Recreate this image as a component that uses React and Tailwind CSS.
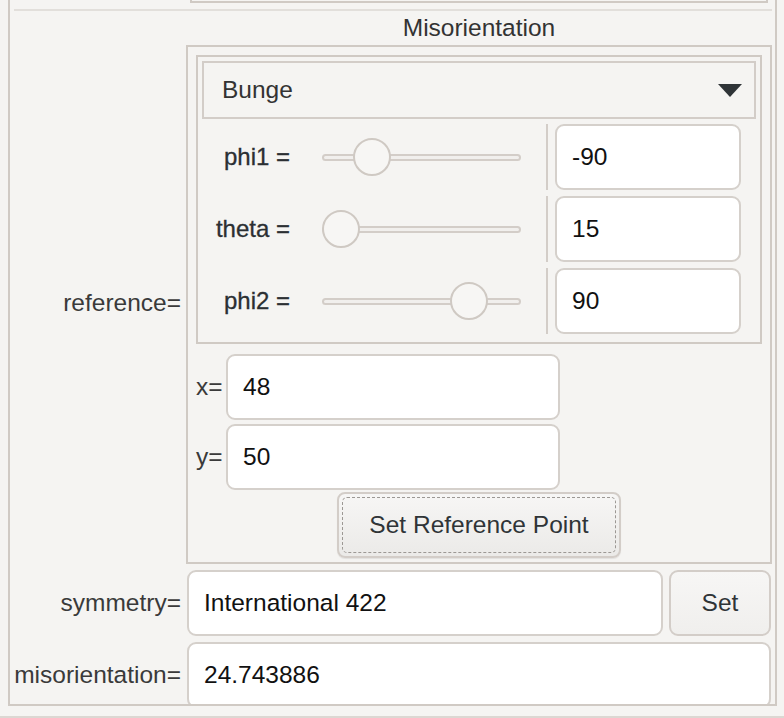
const FONT = "font-['Liberation_Sans',Arial,sans-serif]";

function Slider({ thumb }) {
  // thumb = left offset of the knob inside the track area
  return (
    <div className="relative w-[199px] h-[38px] flex items-center">
      <div className="w-full h-[7px] rounded-full border-2 border-[#d3cdc8] bg-[#f1efed]" />
      <div
        className="absolute top-0 w-[38px] h-[38px] rounded-full border-2 border-[#cfc9c3] bg-[#f7f6f4]"
        style={{ left: thumb }}
      />
    </div>
  );
}

function Field({ value, className = "" }) {
  return (
    <div
      className={`h-[66px] flex items-center bg-white border-2 border-[#d5d0cb] rounded-[9px] pl-[15px] text-[24.5px] text-[#111] ${className}`}
    >
      {value}
    </div>
  );
}

function AngleRow({ label, thumb, value }) {
  return (
    <div className="h-[72px] flex items-center">
      <div className="w-[88px] text-right text-[24px] text-[#2b2f33] [-webkit-text-stroke:0.3px_#2b2f33]">
        {label}
      </div>
      <div className="ml-[32px]">
        <Slider thumb={thumb} />
      </div>
      <div className="ml-[25px] w-[2px] h-[66px] bg-[#d3cdc8]" />
      <Field value={value} className="ml-[7px] w-[186px]" />
    </div>
  );
}

export default function App() {
  return (
    <div className={`${FONT} w-[784px] h-[718px] bg-[#f5f4f2] overflow-hidden`}>
      {/* Panel */}
      <div className="ml-[8px] w-[769px] h-[706px] border-x-2 border-b-2 border-[#d0cac4] overflow-hidden">
        {/* Bottom edge of the section above */}
        <div className="ml-[180px] w-[578px] h-[3px] border-x-2 border-b-2 border-[#d0cac4]" />
        <div className="mt-[6px] ml-[4px] mr-[3px] h-[2px] bg-[#e2dfdb]" />

        {/* Title */}
        <div className="flex">
          <div className="w-[176px]" />
          <div className="w-[586px] h-[34px] flex items-center justify-center text-[24.5px] text-[#333]">
            Misorientation
          </div>
        </div>

        {/* reference */}
        <div className="flex items-center">
          <div className="w-[176px] pr-[5px] pb-[3px] text-right text-[24.5px] text-[#3a3a3a]">
            reference=
          </div>
          <div className="w-[586px] border-2 border-[#d0cac4] px-[8px] pt-[8px] pb-[4px]">
            {/* Euler angles box */}
            <div className="border-2 border-[#d0cac4] p-[4px] pb-[5px]">
              <div className="h-[58px] border-2 border-[#d3cdc8] flex items-center justify-between pl-[18px] pr-[12px] text-[24.5px] text-[#333]">
                <span>Bunge</span>
                <svg width="24" height="13" viewBox="0 0 24 13">
                  <path d="M0 0 L24 0 L12 13 Z" fill="#2f3437" />
                </svg>
              </div>
              <div className="mt-[2px]">
                <AngleRow label="phi1 =" thumb={31} value="-90" />
                <AngleRow label="theta =" thumb={0} value="15" />
                <AngleRow label="phi2 =" thumb={128} value="90" />
              </div>
            </div>

            {/* point */}
            <div className="mt-[10px] flex items-center">
              <div className="w-[30px] text-[24.5px] text-[#3a3a3a]">x=</div>
              <Field value="48" className="w-[334px]" />
            </div>
            <div className="mt-[4px] flex items-center">
              <div className="w-[30px] text-[24.5px] text-[#3a3a3a]">y=</div>
              <Field value="50" className="w-[334px]" />
            </div>
            <div className="mt-[2px] flex justify-center">
              <button
                type="button"
                className="w-[284px] h-[66px] rounded-[8px] border-2 border-[#d3cdc8] bg-gradient-to-b from-[#f7f6f5] to-[#ebeae8] p-[3px] shadow-[0_1px_1px_rgba(0,0,0,0.08)]"
              >
                <div className="w-full h-full rounded-[5px] border border-dashed border-[#9c9894] flex items-center justify-center text-[24.5px] text-[#2f3437]">
                  Set Reference Point
                </div>
              </button>
            </div>
          </div>
        </div>

        {/* symmetry */}
        <div className="mt-[6px] flex items-center">
          <div className="w-[177px] pr-[6px] text-right text-[24.5px] text-[#3a3a3a]">
            symmetry=
          </div>
          <Field value="International 422" className="w-[476px]" />
          <button
            type="button"
            className="ml-[6px] w-[102px] h-[66px] rounded-[9px] border-2 border-[#d3cdc8] bg-gradient-to-b from-[#f7f6f5] to-[#f0efed] text-[24.5px] text-[#2f3437]"
          >
            Set
          </button>
        </div>

        {/* misorientation */}
        <div className="mt-[6px] flex items-center">
          <div className="w-[177px] pr-[6px] text-right text-[24.5px] text-[#3a3a3a]">
            misorientation=
          </div>
          <Field value="24.743886" className="w-[584px]" />
        </div>
      </div>

      <div className="mt-[10px] h-[2px] bg-[#dcd7d2]" />
    </div>
  );
}
